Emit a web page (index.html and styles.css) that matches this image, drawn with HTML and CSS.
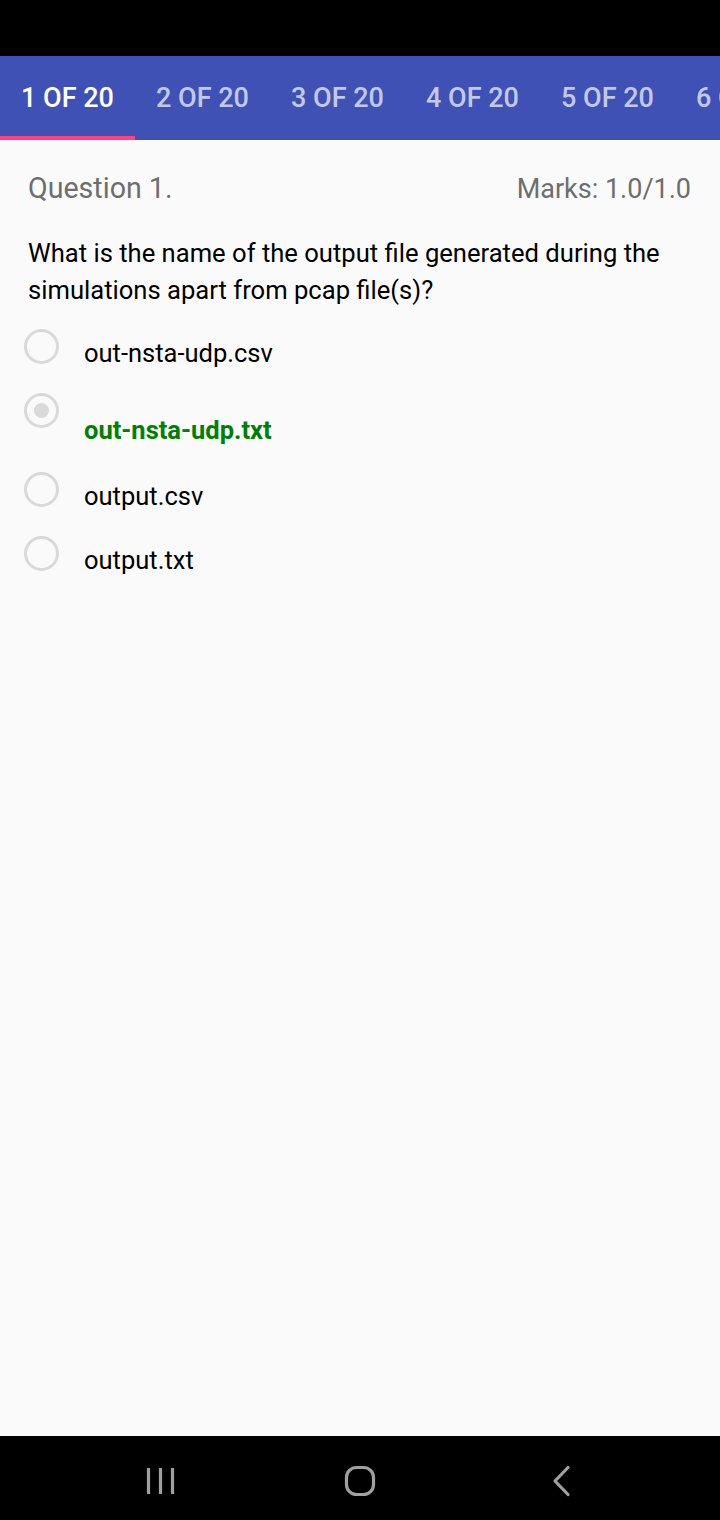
FILE: index.html
```html
<!DOCTYPE html>
<html>
<head>
<meta charset="utf-8">
<link rel="stylesheet" href="styles.css">
</head>
<body>
<div class="screen">
  <div class="statusbar"></div>
  <div class="tabs">
    <div class="tab active">1 OF 20</div>
    <div class="tab">2 OF 20</div>
    <div class="tab">3 OF 20</div>
    <div class="tab">4 OF 20</div>
    <div class="tab">5 OF 20</div>
    <div class="tab">6 OF 20</div>
  </div>
  <div class="content">
    <div class="qhead">
      <span class="qnum">Question 1.</span>
      <span class="marks">Marks: 1.0/1.0</span>
    </div>
    <div class="qtext">What is the name of the output file generated during the simulations apart from pcap file(s)?</div>
    <div class="options">
      <div class="opt">
        <span class="radio"></span>
        <span class="label">out-nsta-udp.csv</span>
      </div>
      <div class="opt opt-correct">
        <span class="radio checked"></span>
        <span class="label correct">out-nsta-udp.txt</span>
      </div>
      <div class="opt">
        <span class="radio"></span>
        <span class="label">output.csv</span>
      </div>
      <div class="opt">
        <span class="radio"></span>
        <span class="label">output.txt</span>
      </div>
    </div>
  </div>
  <div class="navbar">
    <svg class="nav-icon" width="40" height="40" viewBox="0 0 40 40">
      <path d="M7.5 7v26M19.5 7v26M31.5 7v26" stroke="#a0a0a0" stroke-width="3.2" fill="none"/>
    </svg>
    <svg class="nav-icon" width="40" height="40" viewBox="0 0 40 40">
      <rect x="6.5" y="6.5" width="27" height="27" rx="10" ry="10" stroke="#a0a0a0" stroke-width="3.2" fill="none"/>
    </svg>
    <svg class="nav-icon" width="40" height="40" viewBox="0 0 40 40">
      <path d="M30 6.5L17 20L30 33.5" stroke="#a0a0a0" stroke-width="3.2" fill="none" stroke-linecap="round" stroke-linejoin="round"/>
    </svg>
  </div>
</div>
</body>
</html>
```

FILE: styles.css
```css
* { box-sizing: border-box; }
html, body { margin: 0; padding: 0; }
body {
  width: 720px;
  height: 1520px;
  overflow: hidden;
  background: #fafafa;
  font-family: Roboto, "Liberation Sans", sans-serif;
}
.screen {
  width: 720px;
  height: 1520px;
  display: flex;
  flex-direction: column;
}
.statusbar {
  height: 56px;
  background: #000;
  flex: none;
}
.tabs {
  height: 84px;
  background: #3f51b5;
  display: flex;
  flex: none;
  overflow: hidden;
}
.tab {
  flex: none;
  width: 135px;
  display: flex;
  align-items: center;
  justify-content: center;
  font-size: 27px;
  font-weight: 500;
  color: rgba(255,255,255,0.7);
  white-space: nowrap;
  border-bottom: 4px solid transparent;
  padding-top: 4px;
}
.tab:last-child {
  justify-content: flex-start;
  padding-left: 21px;
}
.tab.active {
  color: #fff;
  border-bottom-color: #ff4081;
}
.content {
  flex: 1;
  background: #fafafa;
  padding: 31px 29px 0 0;
}
.qhead {
  display: flex;
  justify-content: space-between;
  align-items: baseline;
  padding-left: 28px;
  color: #6e6e6e;
  line-height: 34px;
}
.qnum {
  font-size: 28.6px;
}
.marks {
  font-size: 27px;
}
.qtext {
  padding-left: 28px;
  margin-top: 29px;
  font-size: 25.6px;
  line-height: 37px;
  color: #000;
}
.options {
  margin-top: 16px;
  padding-left: 24px;
}
.opt {
  display: flex;
  align-items: flex-start;
  height: 64px;
  padding-top: 4px;
}
.opt-correct {
  height: 79px;
}
.radio {
  flex: none;
  width: 35px;
  height: 35px;
  border: 3px solid #d9d9d9;
  border-radius: 50%;
  display: flex;
  align-items: center;
  justify-content: center;
}
.radio.checked::after {
  content: "";
  width: 15px;
  height: 15px;
  border-radius: 50%;
  background: #d9d9d9;
}
.label {
  margin-left: 25px;
  margin-top: 10px;
  font-size: 25.5px;
  line-height: 28px;
  color: #000;
}
.label.correct {
  margin-top: 23px;
  color: #008000;
  font-weight: 700;
}
.navbar {
  height: 84px;
  background: #000;
  flex: none;
  display: flex;
  align-items: center;
  justify-content: space-between;
  padding: 6px 142px 0 141px;
}
.nav-icon {
  display: block;
}
```
